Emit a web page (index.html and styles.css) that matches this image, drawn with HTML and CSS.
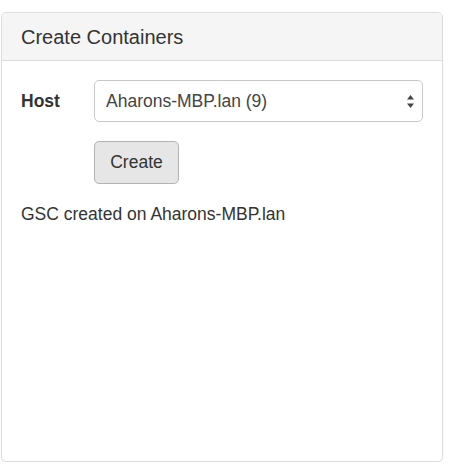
FILE: index.html
```
<!DOCTYPE html>
<html>
<head>
<meta charset="utf-8">
<link rel="stylesheet" href="styles.css">
</head>
<body>
<div class="panel">
  <div class="panel-heading"><h3 class="panel-title">Create Containers</h3></div>
  <div class="panel-body">
    <div class="form-row">
      <label class="label">Host</label>
      <div class="select">
        <span class="select-text">Aharons-MBP.lan (9)</span>
        <svg class="select-arrows" width="7" height="13" viewBox="0 0 7 13"><path d="M3.5 0 L7 4.5 L0 4.5 Z" fill="#444"/><path d="M0 8.5 L7 8.5 L3.5 13 Z" fill="#444"/></svg>
      </div>
    </div>
    <div class="btn-row">
      <button class="btn">Create</button>
    </div>
    <p class="status">GSC created on Aharons-MBP.lan</p>
  </div>
</div>
</body>
</html>
```
FILE: styles.css
```
html, body {
  margin: 0;
  padding: 0;
  background: #fff;
}
body {
  font-family: "Liberation Sans", Arial, sans-serif;
  font-size: 17.5px;
  line-height: 25px;
  color: #333;
}
.panel {
  box-sizing: border-box;
  margin: 12px 0 0 1px;
  width: 442px;
  height: 450px;
  border: 1px solid #dcdcdc;
  border-radius: 5px;
  box-shadow: 0 1px 1px rgba(0,0,0,0.05);
  overflow: hidden;
}
.panel-heading {
  background: #f5f5f5;
  border-bottom: 1px solid #dcdcdc;
  padding: 12.5px 19px;
}
.panel-title {
  margin: 0;
  font-size: 20px;
  line-height: 22px;
  font-weight: normal;
  color: #333;
}
.panel-body {
  padding: 19px;
}
.form-row {
  display: flex;
  align-items: center;
}
.label {
  width: 73px;
  font-weight: bold;
}
.select {
  box-sizing: border-box;
  flex: 1;
  height: 42px;
  border: 1px solid #c8c8c8;
  border-radius: 5px;
  display: flex;
  align-items: center;
  justify-content: space-between;
  padding: 0 8px 0 11px;
  color: #444;
}
.select-arrows {
  display: block;
  margin-top: 1px;
}
.btn-row {
  padding-left: 73px;
  margin-top: 19px;
}
.btn {
  box-sizing: border-box;
  width: 85px;
  height: 43px;
  font-family: inherit;
  font-size: 17.5px;
  color: #333;
  background: #e6e6e6;
  border: 1px solid #b3b3b3;
  border-radius: 5px;
  padding: 0;
}
.status {
  margin: 18px 0 0 0;
}
```
